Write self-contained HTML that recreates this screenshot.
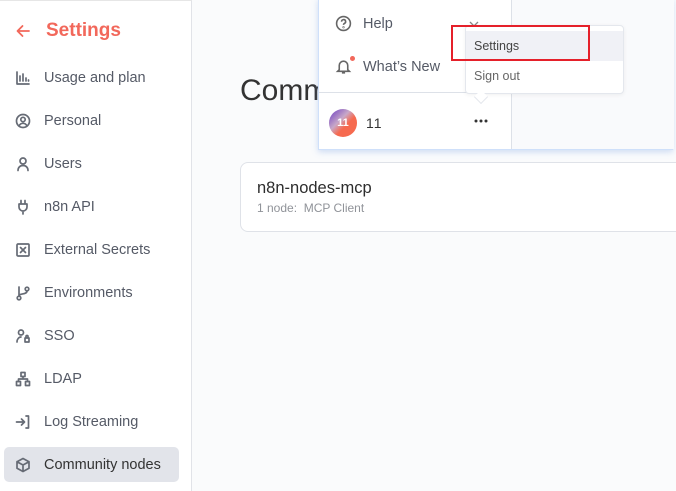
<!DOCTYPE html>
<html><head><meta charset="utf-8"><style>
*{box-sizing:border-box;margin:0;padding:0}
body{width:676px;height:491px;overflow:hidden;background:#fafbfc;font-family:"Liberation Sans",sans-serif;position:relative;color:#555}
.side{position:absolute;left:0;top:0;width:192px;height:491px;background:#fff;border-right:1px solid #e1e3e8;border-top:1px solid #e6e6e6}
.title{position:absolute;left:16px;top:19px;color:#f2685b;font-size:19px;font-weight:bold;display:flex;align-items:center}
.title svg{width:14px;height:14px;margin-right:16px;fill:none;stroke:#f2685b;stroke-width:1.8;stroke-linecap:round;stroke-linejoin:round}
.item{position:absolute;left:4px;width:175px;height:35px;display:flex;align-items:center;font-size:14.5px;color:#555a66}
.item svg{margin-left:11px;margin-right:13px;width:16px;height:16px;fill:none;stroke:#666b75;stroke-width:1.7;stroke-linecap:round;stroke-linejoin:round}
.item.act{background:#e2e4ea;border-radius:5px;color:#333}
.h1{position:absolute;left:240px;top:74px;font-size:30px;color:#333}
.card{position:absolute;left:240px;top:162px;width:450px;height:70px;background:#fff;border:1px solid #dfe2e8;border-radius:8px}
.card b{position:absolute;left:16px;top:16px;font-size:16.5px;font-weight:normal;color:#2d2d2d}
.card i{position:absolute;left:16px;top:38px;font-size:12px;font-style:normal;color:#909399}
.panel{position:absolute;left:318px;top:-2px;width:355px;height:152px;background:#fff;border:1px solid #cfe0fa;box-shadow:0 2px 6px rgba(120,160,230,.35)}
.panel .r{position:absolute;left:192px;top:0;width:163px;height:150px;background:#f9fafc;border-left:1px solid #dde1e8}
.panel .sep{position:absolute;left:0;top:93px;width:192px;border-top:1px solid #dde1e8}
.pi{position:absolute;left:16px;font-size:14.5px;color:#555a66;display:flex;align-items:center}
.pi svg{width:17px;height:17px;margin-right:11px;fill:none;stroke:#666;stroke-width:1.5}
.av{position:absolute;left:10px;top:110px;width:28px;height:28px;border-radius:50%;background:linear-gradient(135deg,#6a3bc2 0%,#c8a8c8 40%,#f66a4f 60%,#f56a4f);color:#fff;font-size:11px;font-weight:bold;text-align:center;line-height:28px}
.pop{position:absolute;left:465px;top:25px;width:159px;height:69px;background:#fff;border:1px solid #e4e7ed;border-radius:4px;box-shadow:0 1px 4px rgba(0,0,0,.06)}
.pop .s{position:absolute;left:0;top:5px;width:157px;height:30px;background:#f0f1f6;font-size:12.5px;color:#444;padding:8px 8px}
.pop .o{position:absolute;left:8px;top:43px;font-size:12.5px;color:#666}
.red{position:absolute;left:451px;top:25px;width:139px;height:36px;border:2px solid #e5202a}
</style></head><body>
<div class="side">
<div class="title"><svg viewBox="0 0 14 14"><path d="M13 7H1.5M6.5 2L1.5 7l5 5"/></svg>Settings</div>
<div class="item" style="top:59px"><svg viewBox="0 0 16 16"><path d="M2 2v12h12M5 11V6M8 11V4M11 11V8M13.5 11v-1"/></svg>Usage and plan</div>
<div class="item" style="top:102px"><svg viewBox="0 0 16 16"><circle cx="8" cy="8" r="6.5"/><circle cx="8" cy="6.5" r="2.2"/><path d="M4 13c1-2 2.5-2.7 4-2.7s3 .7 4 2.7"/></svg>Personal</div>
<div class="item" style="top:145px"><svg viewBox="0 0 16 16"><circle cx="8" cy="5" r="3"/><path d="M3 14.5c0-3 2-5 5-5s5 2 5 5"/></svg>Users</div>
<div class="item" style="top:188px"><svg viewBox="0 0 16 16"><path d="M6 1.5v3.5M10 1.5v3.5M4 5h8v3a4 4 0 0 1-8 0zM8 12v3"/></svg>n8n API</div>
<div class="item" style="top:231px"><svg viewBox="0 0 16 16"><rect x="2" y="2" width="12" height="12" rx="1"/><path d="M5.5 5.5l5 5M10.5 5.5l-5 5"/></svg>External Secrets</div>
<div class="item" style="top:274px"><svg viewBox="0 0 16 16"><circle cx="4" cy="13" r="1.8"/><circle cx="12" cy="4" r="1.8"/><path d="M4 2v9M12 6c0 4-8 2-8 5"/></svg>Environments</div>
<div class="item" style="top:317px"><svg viewBox="0 0 16 16"><circle cx="6" cy="4.5" r="2.5"/><path d="M2 14c0-3 2-5 4-5M10 10h4v4h-4zM11 10V8.5a1 1 0 0 1 2 0V10"/></svg>SSO</div>
<div class="item" style="top:360px"><svg viewBox="0 0 16 16"><rect x="6" y="1.5" width="4" height="4"/><rect x="1.5" y="10.5" width="4" height="4"/><rect x="10.5" y="10.5" width="4" height="4"/><path d="M8 5.5v2.5M3.5 10.5V8h9v2.5"/></svg>LDAP</div>
<div class="item" style="top:403px"><svg viewBox="0 0 16 16"><path d="M1.5 8h8M6.5 5l3 3-3 3M11 2h2.5v12H11"/></svg>Log Streaming</div>
<div class="item act" style="top:446px"><svg viewBox="0 0 16 16"><path d="M8 1.5l6 3.2v6.6L8 14.5 2 11.3V4.7zM2 4.7L8 8l6-3.3M8 8v6.5"/></svg>Community nodes</div>
</div>
<div class="h1">Community nodes</div>
<div class="card"><b>n8n-nodes-mcp</b><i>1 node:&nbsp; MCP Client</i></div>
<div class="panel">
<div class="r"></div>
<div class="pi" style="top:16px"><svg viewBox="0 0 16 16"><circle cx="8" cy="8" r="6.5"/><path d="M6.2 6.3a1.9 1.9 0 1 1 2.6 1.7c-.6.3-.8.7-.8 1.3"/><circle cx="8" cy="11.5" r=".3"/></svg>Help</div>
<svg style="position:absolute;left:150px;top:22px" width="10" height="6" viewBox="0 0 10 6"><path d="M1 1l4 4 4-4" fill="none" stroke="#888" stroke-width="1.3"/></svg>
<div class="pi" style="top:59px"><svg viewBox="0 0 16 16"><path d="M4 11V7a4 4 0 0 1 8 0v4l1.5 1.5h-11zM6.5 14h3"/></svg>What’s New</div>
<div style="position:absolute;left:31px;top:57px;width:5px;height:5px;border-radius:50%;background:#f2685b"></div>
<div class="sep"></div>
<div class="av">11</div>
<div style="position:absolute;left:47px;top:116px;font-size:14px;color:#333;letter-spacing:1px">11</div>
<svg style="position:absolute;left:155px;top:120px" width="14" height="4" viewBox="0 0 14 4"><circle cx="2" cy="2" r="1.5" fill="#333"/><circle cx="7" cy="2" r="1.5" fill="#333"/><circle cx="12" cy="2" r="1.5" fill="#333"/></svg>
</div>
<div class="pop"><div class="s">Settings</div><div class="o">Sign out</div></div>
<div style="position:absolute;left:476px;top:92px;width:10px;height:10px;background:#fff;border-right:1px solid #e4e7ed;border-bottom:1px solid #e4e7ed;transform:rotate(45deg)"></div>
<div class="red"></div>
</body></html>
